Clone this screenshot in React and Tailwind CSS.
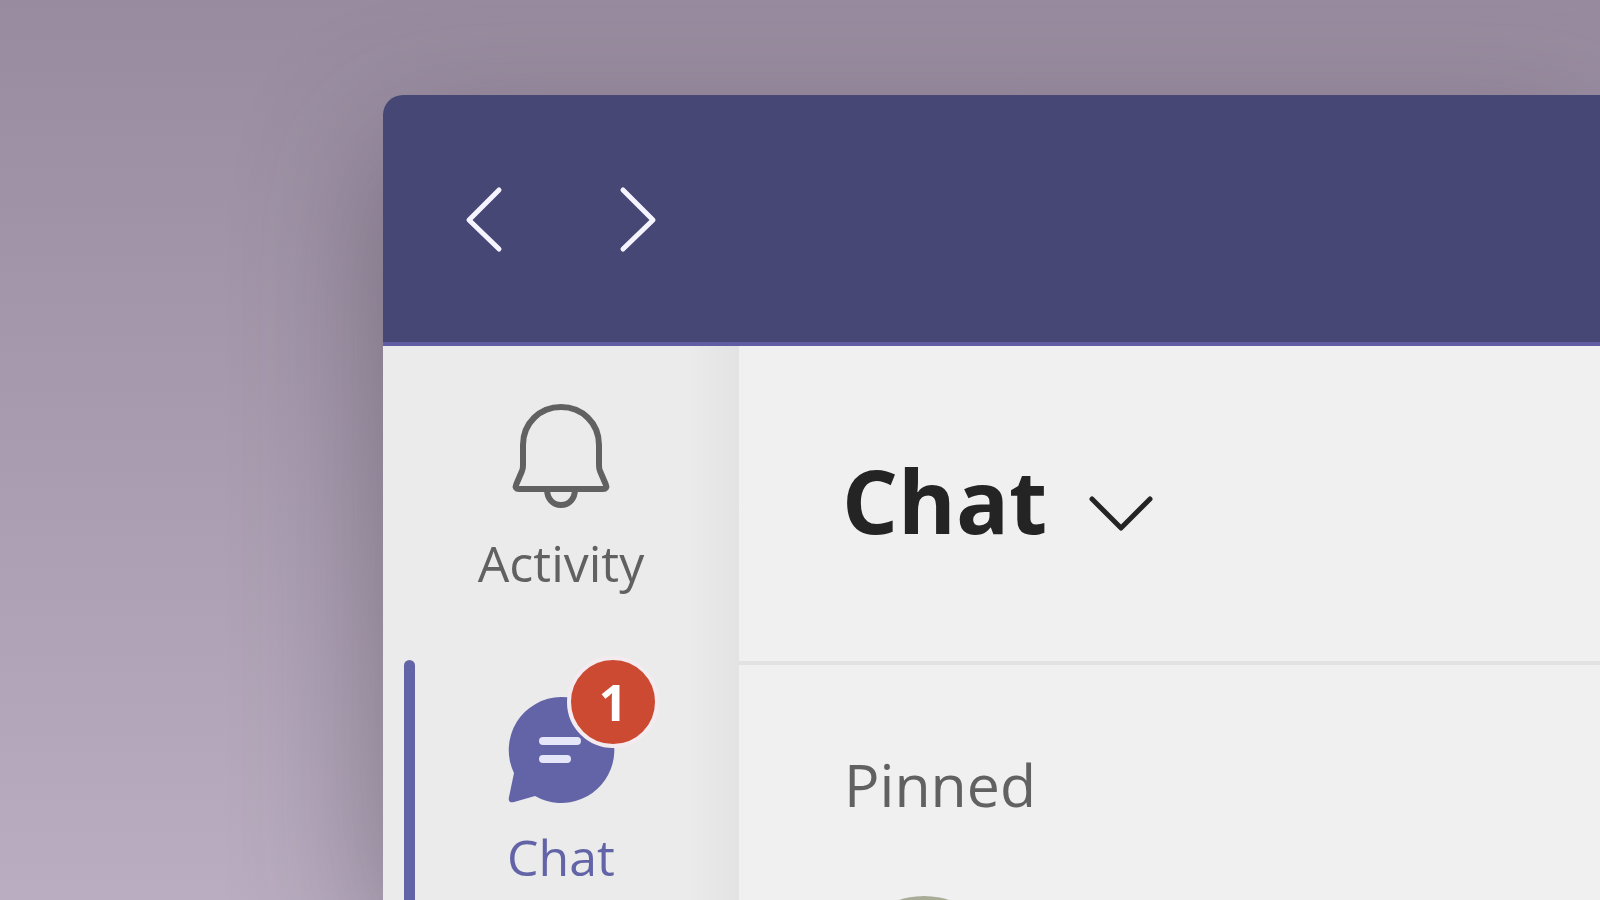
function BackIcon() {
  return (
    <svg viewBox="0 0 40 70" className="h-[70px] w-10" fill="none" stroke="currentColor" strokeWidth="5" strokeLinecap="round" strokeLinejoin="round">
      <path d="M36 6 6 36l30 29" />
    </svg>
  );
}

function ForwardIcon() {
  return (
    <svg viewBox="0 0 40 70" className="h-[70px] w-10" fill="none" stroke="currentColor" strokeWidth="5" strokeLinecap="round" strokeLinejoin="round">
      <path d="M4 6l30 30L4 65" />
    </svg>
  );
}

function BellIcon() {
  return (
    <svg viewBox="0 0 100 108" className="h-[108px] w-[100px]" fill="none" stroke="currentColor" strokeWidth="6" strokeLinejoin="round">
      <path d="M12 43C12 21 29 5 50 5s38 16 38 38v20c0 2 0 4 1 6l6 14c1 2 0 4-3 4H8c-3 0-4-2-3-4l6-14c1-2 1-4 1-6z" />
      <path d="M36 87c0 10 6 16 14 16s14-6 14-16" />
    </svg>
  );
}

function ChatIcon() {
  return (
    <svg viewBox="0 0 108 108" className="size-[108px]">
      <path
        fill="currentColor"
        d="M54 1a53 53 0 1 1-26 99L7 106c-4 1-6-1-5-5l5-24A53 53 0 0 1 54 1z"
      />
      <path d="M36 45h34M36 63h24" stroke="#e6e6fb" strokeWidth="8" strokeLinecap="round" />
    </svg>
  );
}

function ChevronDownIcon() {
  return (
    <svg viewBox="0 0 64 40" className="h-10 w-16" fill="none" stroke="currentColor" strokeWidth="5" strokeLinecap="round" strokeLinejoin="round">
      <path d="M3 5l29 29L61 5" />
    </svg>
  );
}

function TitleBar() {
  return (
    <header className="flex h-[251px] shrink-0 items-center gap-[116px] rounded-tl-[20px] border-b-4 border-[#605da3] bg-[#464775] pl-20 text-[#f6f5ff]">
      <button type="button" aria-label="Back">
        <BackIcon />
      </button>
      <button type="button" aria-label="Forward">
        <ForwardIcon />
      </button>
    </header>
  );
}

function RailItem({ icon, label, badge, active = false }) {
  return (
    <button
      type="button"
      aria-current={active ? "page" : undefined}
      className={`relative flex w-full flex-col items-center gap-[18px] text-[50px] leading-[70px] ${active ? "text-[#6264a7]" : "text-[#616161]"}`}
    >
      <span className="relative">
        {icon}
        {badge && (
          <span className="absolute -top-10 left-[60px] flex size-[92px] items-center justify-center rounded-full border-4 border-[#f3ebf0] bg-[#cc4a31] text-[50px] leading-none font-bold text-white">
            {badge}
          </span>
        )}
      </span>
      {label}
    </button>
  );
}

function Rail() {
  return (
    <nav className="relative flex w-[356px] shrink-0 flex-col gap-[98px] bg-linear-to-r from-[#ebebeb] from-85% to-[#e3e3e3] pt-[56px]">
      <RailItem icon={<BellIcon />} label="Activity" />
      <div className="relative">
        <span className="absolute -top-9 left-[21px] h-[400px] w-[11px] rounded-full bg-[#6264a7]" />
        <RailItem icon={<ChatIcon />} label="Chat" badge="1" active />
      </div>
    </nav>
  );
}

function ChatList() {
  return (
    <main className="flex min-w-0 flex-1 flex-col bg-[#f0f0f0]">
      <div className="flex h-[319px] shrink-0 items-center border-b-4 border-[#e2e2e2] pb-2 pl-[103px]">
        <button type="button" className="flex items-center gap-[42px] text-[#242424]">
          <h1 className="text-[88px] leading-[120px] font-bold">Chat</h1>
          <span className="pt-7">
            <ChevronDownIcon />
          </span>
        </button>
      </div>
      <section className="pt-[77px] pl-[105px]">
        <h2 className="text-[59px] leading-[84px] text-[#616161]">Pinned</h2>
        <div className="mt-[70px] size-40 rounded-full bg-[#a9ad97]" />
      </section>
    </main>
  );
}

export default function App() {
  return (
    <div className="h-screen overflow-hidden bg-linear-to-b from-[#988b9f] to-[#baadc1] pt-[95px] pl-[383px] font-['Open_Sans','Noto_Sans',sans-serif]">
      <div className="flex h-full flex-col rounded-tl-[20px] shadow-[0_50px_140px_rgba(60,50,65,0.45)]">
        <TitleBar />
        <div className="flex min-h-0 flex-1">
          <Rail />
          <ChatList />
        </div>
      </div>
    </div>
  );
}
